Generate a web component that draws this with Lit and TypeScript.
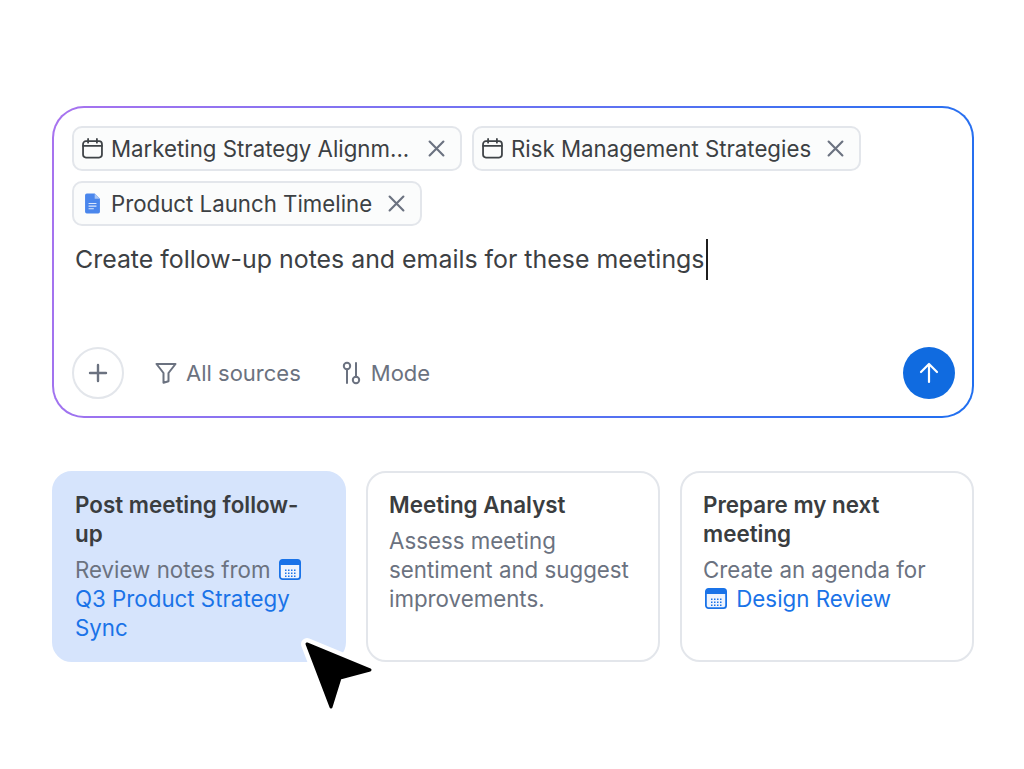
import { LitElement, html, css, svg } from 'lit';
import { customElement } from 'lit/decorators.js';

// small shared icons
const calendarLine = html`<svg class="chip-icon" viewBox="0 0 20 20" fill="none" stroke="#3f4347" stroke-width="1.7" stroke-linecap="round" stroke-linejoin="round">
  <rect x="1" y="3" width="18" height="15.6" rx="2.8"></rect>
  <path d="M1 7.6h18M5.8 0.9v3.6M14.2 0.9v3.6"></path>
</svg>`;

const docIcon = html`<svg class="chip-icon" viewBox="0 0 20 24">
  <path d="M3.5 0.5H12.5L18.5 6.5V21.5a2 2 0 0 1-2 2H3.5a2 2 0 0 1-2-2V2.5a2 2 0 0 1 2-2z" fill="#4a86ec"></path>
  <path d="M12.5 0.5L18.5 6.5H12.5z" fill="#a9c6f6"></path>
  <path d="M5.5 12h9M5.5 15h9M5.5 18h6" stroke="#dbe7fb" stroke-width="1.3"></path>
</svg>`;

const closeIcon = html`<svg class="close" viewBox="0 0 16 16" fill="none" stroke="#6b7280" stroke-width="2" stroke-linecap="round">
  <path d="M1.5 1.5l13 13M14.5 1.5l-13 13"></path>
</svg>`;

const calendarSolid = () => {
  const dots = [];
  for (const y of [10.5, 13.5, 16.5]) {
    for (const x of [6, 9, 12, 15]) {
      dots.push(svg`<rect x=${x} y=${y} width="1.5" height="1.5" fill="#1a73e8"></rect>`);
    }
  }
  return html`<svg class="cal" viewBox="0 0 22 21">
    <rect x="0.9" y="0.9" width="20.2" height="19.2" rx="2.6" fill="#eef4fe" stroke="#1a73e8" stroke-width="1.8"></rect>
    <path d="M0.9 3.5a2.6 2.6 0 0 1 2.6-2.6h15a2.6 2.6 0 0 1 2.6 2.6V6H0.9z" fill="#1a73e8"></path>
    ${dots}
  </svg>`;
};

@customElement('app-root')
export class AppRoot extends LitElement {
  static styles = css`
    :host {
      display: block;
      position: relative;
      height: 769px;
      box-sizing: border-box;
      padding: 106px 50px 0 52px;
      background: #ffffff;
      font-family: Inter, 'Liberation Sans', sans-serif;
      color: #3c4043;
    }

    /* composer with gradient outline */
    .composer {
      box-sizing: border-box;
      height: 312px;
      padding: 18px 17px 17px 18px;
      border: 2px solid transparent;
      border-radius: 32px;
      background:
        linear-gradient(#fff, #fff) padding-box,
        linear-gradient(100deg, #a873ef 0%, #6f72f2 45%, #1f6ff0 100%) border-box;
      display: flex;
      flex-direction: column;
    }

    .chips {
      display: flex;
      flex-wrap: wrap;
      gap: 10px;
    }

    .chip {
      box-sizing: border-box;
      height: 45px;
      display: flex;
      align-items: center;
      padding: 0 15px 0 8px;
      border: 2px solid #e3e6eb;
      border-radius: 10px;
      background: #fbfcfc;
      font-size: 22.25px;
      white-space: nowrap;
    }

    .chip-icon {
      width: 21px;
      height: 21px;
      margin-right: 8px;
      flex: none;
    }

    .label-cut {
      width: 301.5px;
    }

    .close {
      width: 17px;
      height: 17px;
      margin-left: 15.5px;
      flex: none;
    }

    .prompt {
      margin: 13px 0 0 3px;
      font-size: 24.9px;
      line-height: 41px;
      color: #3c4043;
      display: flex;
      align-items: center;
    }

    .caret {
      width: 2px;
      height: 41px;
      background: #1f1f1f;
      margin-left: 1px;
    }

    .toolbar {
      margin-top: auto;
      display: flex;
      align-items: center;
      color: #6b7280;
      font-size: 22px;
    }

    .plus {
      box-sizing: border-box;
      width: 52px;
      height: 52px;
      border-radius: 50%;
      border: 2px solid #e3e6eb;
      display: flex;
      align-items: center;
      justify-content: center;
      margin-right: 31px;
    }

    .tool {
      display: flex;
      align-items: center;
      gap: 9px;
      margin-right: 41px;
    }

    .tool svg {
      flex: none;
    }

    .send {
      margin-left: auto;
      width: 52px;
      height: 52px;
      border-radius: 50%;
      background: #106be0;
      display: flex;
      align-items: center;
      justify-content: center;
    }

    /* suggestion cards */
    .cards {
      margin-top: 53px;
      display: flex;
      gap: 20px;
    }

    .card {
      box-sizing: border-box;
      flex: 1;
      height: 191px;
      padding: 17px 21px;
      border: 2px solid #e3e6eb;
      border-radius: 20px;
      font-size: 22.3px;
      line-height: 29px;
      color: #6b7280;
    }

    .card.active {
      background: #d6e4fc;
      border-color: #d6e4fc;
    }

    .card h3 {
      margin: 0 0 7px;
      font-size: 22.4px;
      line-height: 29px;
      font-weight: 600;
      color: #3a3d40;
    }

    .card p {
      margin: 0;
    }

    .link {
      color: #1a73e8;
    }

    .cal {
      width: 22px;
      height: 21px;
      vertical-align: -2px;
      margin: 0 3px 0 2px;
    }

    .pointer {
      position: absolute;
      left: 290px;
      top: 628px;
      width: 96px;
      height: 96px;
    }
  `;

  render() {
    return html`
      <div class="composer">
        <div class="chips">
          <div class="chip">${calendarLine}<span class="label-cut">Marketing Strategy Alignm...</span>${closeIcon}</div>
          <div class="chip">${calendarLine}Risk Management Strategies${closeIcon}</div>
          <div class="chip">${docIcon}Product Launch Timeline${closeIcon}</div>
        </div>
        <div class="prompt">Create follow-up notes and emails for these meetings<span class="caret"></span></div>
        <div class="toolbar">
          <div class="plus">
            <svg width="20" height="20" viewBox="0 0 20 20" stroke="#6b7280" stroke-width="2.4" stroke-linecap="round"><path d="M10 2v16M2 10h16"></path></svg>
          </div>
          <div class="tool">
            <svg width="22" height="22" viewBox="0 0 22 22" fill="none" stroke="#6b7280" stroke-width="2" stroke-linejoin="round"><path d="M1.5 2h19l-7 9v8.2l-5 1.6V11z"></path></svg>
            All sources
          </div>
          <div class="tool">
            <svg width="20" height="24" viewBox="0 0 20 24" fill="none" stroke="#6b7280" stroke-width="2" stroke-linecap="round"><circle cx="5" cy="5" r="3.2"></circle><path d="M5 8.2V22M14 2v14"></path><circle cx="14" cy="19" r="3.2"></circle></svg>
            Mode
          </div>
          <div class="send">
            <svg width="22" height="22" viewBox="0 0 22 22" fill="none" stroke="#fff" stroke-width="2.2" stroke-linecap="round" stroke-linejoin="round"><path d="M11 20V2M3 10l8-8 8 8"></path></svg>
          </div>
        </div>
      </div>

      <div class="cards">
        <div class="card active">
          <h3>Post meeting follow-up</h3>
          <p>Review notes from ${calendarSolid()} <span class="link">Q3 Product Strategy Sync</span></p>
        </div>
        <div class="card">
          <h3>Meeting Analyst</h3>
          <p>Assess meeting sentiment and suggest improvements.</p>
        </div>
        <div class="card">
          <h3>Prepare my next meeting</h3>
          <p>Create an agenda for<br />${calendarSolid()}<span class="link"> Design Review</span></p>
        </div>
      </div>

      <svg class="pointer" viewBox="0 0 96 96">
        <path d="M17 16L80 42L50 50L41 79z" fill="#000" stroke="#fff" stroke-width="12" stroke-linejoin="round"></path>
        <path d="M17 16L80 42L50 50L41 79z" fill="#000" stroke="#000" stroke-width="3" stroke-linejoin="round"></path>
      </svg>
    `;
  }
}
